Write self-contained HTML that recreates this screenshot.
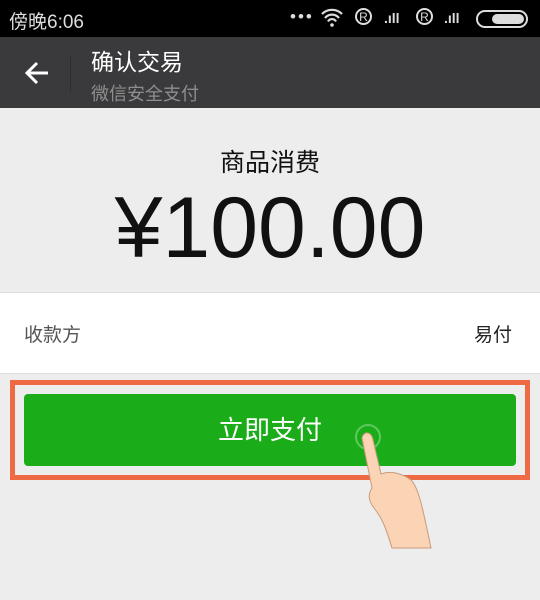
<!DOCTYPE html><html><head><meta charset="utf-8"><style>
body{margin:0;width:540px;height:600px;background:#ededed;font-family:"Liberation Sans","Noto Sans CJK SC",sans-serif;position:relative;overflow:hidden}
div{position:absolute}
</style></head><body>
<div style="left:0;top:0;width:540px;height:37px;background:#000"></div>
<div style="left:9px;top:7px;color:#ddd;font-size:19px">傍晚6:06</div>
<div style="left:290px;top:7px;color:#ddd;font-size:17px;letter-spacing:2px">•••</div>
<svg style="position:absolute;left:320px;top:7px" width="24" height="20"><path d="M2 7a14 14 0 0 1 20 0M5 11a9 9 0 0 1 14 0M8 14.5a4.5 4.5 0 0 1 8 0" stroke="#ddd" stroke-width="2.2" fill="none"/><circle cx="12" cy="18" r="1.8" fill="#ddd"/></svg>
<div style="left:355px;top:8px;width:17px;height:17px;border:2px solid #ddd;border-radius:50%;color:#ddd;font-size:12px;text-align:center;line-height:14px;box-sizing:border-box">R</div>
<div style="left:384px;top:10px;color:#ddd;font-size:14px;font-weight:bold">.ıll</div>
<div style="left:416px;top:8px;width:17px;height:17px;border:2px solid #ddd;border-radius:50%;color:#ddd;font-size:12px;text-align:center;line-height:14px;box-sizing:border-box">R</div>
<div style="left:444px;top:10px;color:#ddd;font-size:14px;font-weight:bold">.ıll</div>
<div style="left:476px;top:10px;width:52px;height:18px;border:2px solid #ddd;border-radius:9px;box-sizing:border-box"><div style="left:14px;top:2px;width:32px;height:10px;background:#ddd;border-radius:5px"></div></div>
<div style="left:0;top:37px;width:540px;height:71px;background:#3a3a3c"></div>
<svg style="position:absolute;left:24px;top:60px" width="26" height="26"><path d="M24 13H3M13 3L3 13l10 10" stroke="#fff" stroke-width="3" fill="none"/></svg>
<div style="left:70px;top:56px;width:1px;height:36px;background:#2e2e2e"></div>
<div style="left:91px;top:43px;color:#fff;font-size:23px">确认交易</div>
<div style="left:91px;top:80px;color:#8e8e8e;font-size:18px">微信安全支付</div>
<div style="left:0;top:143px;width:540px;text-align:center;font-size:25px;color:#111">商品消费</div>
<div style="left:0;top:178px;width:540px;text-align:center;font-size:86px;color:#111;line-height:100px">¥100.00</div>
<div style="left:0;top:292px;width:540px;height:80px;background:#fff;border-top:1px solid #ddd;border-bottom:1px solid #ddd"></div>
<div style="left:24px;top:320px;font-size:19px;color:#555">收款方</div>
<div style="left:474px;top:320px;font-size:19px;color:#222">易付</div>
<div style="left:10px;top:380px;width:510px;height:90px;border:5px solid #ed6a45"></div>
<div style="left:24px;top:394px;width:492px;height:72px;background:#1aad19;border-radius:4px;color:#fff;font-size:26px;text-align:center;line-height:72px">立即支付</div>
<svg style="position:absolute;left:340px;top:420px" width="110" height="130">
<circle cx="28" cy="17" r="12" fill="none" stroke="#7dd37c" stroke-width="2" opacity=".7"/>
<path d="M22 18c2-8 10-6 11 2l8 34c10-4 22 0 30 6c8 8 12 30 20 68H52c-6-20-10-30-18-40c-6-8-6-14-2-20z" fill="#fbd4b6" stroke="#c99a7c" stroke-width="1"/>
</svg>
</body></html>
